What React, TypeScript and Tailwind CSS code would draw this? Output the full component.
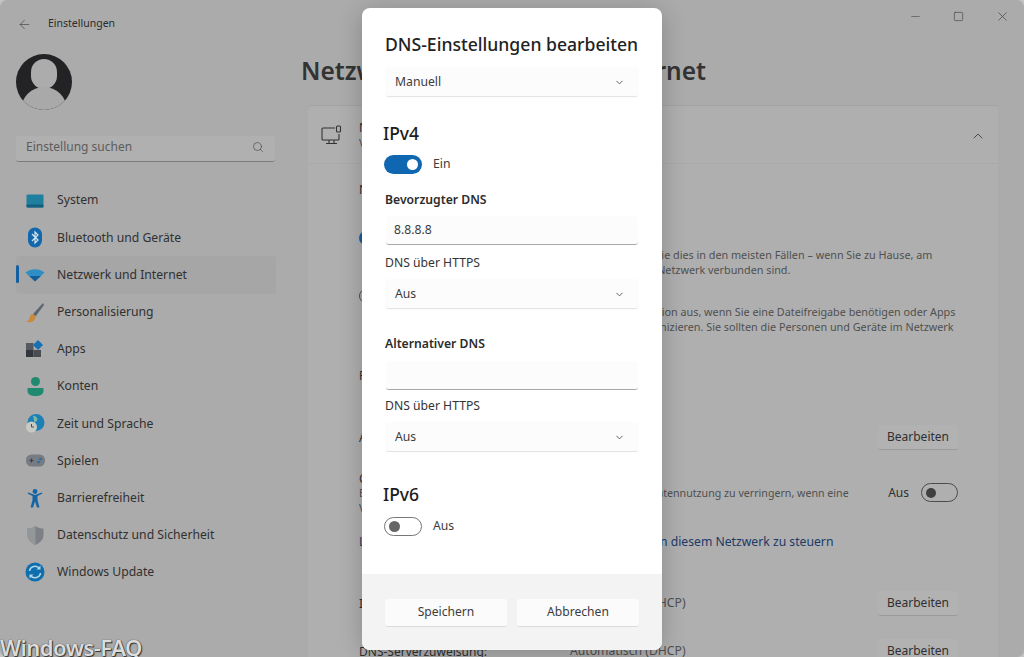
import React from "react";
import { ArrowLeft, Search, ChevronDown, ChevronUp, Minus, Square, X } from "lucide-react";

const font = { fontFamily: '"Noto Sans", "Open Sans", sans-serif' };

function SystemIcon() {
  return (
    <svg width="18" height="14" viewBox="0 0 18 14">
      <rect x="0.5" y="0.5" width="17" height="13" rx="1" fill="#1f7f9f" />
      <rect x="0.5" y="10.5" width="17" height="3" rx="1" fill="#155f7f" />
    </svg>
  );
}
function BluetoothIcon() {
  return (
    <svg width="16" height="21" viewBox="0 0 16 21">
      <rect x="1" y="0.5" width="14" height="20" rx="7" fill="#1267ad" />
      <path d="M5 7l6 6-3 3V5l3 3-6 6" fill="none" stroke="#d8e6f0" strokeWidth="1.2" />
    </svg>
  );
}
function WifiIcon() {
  return (
    <svg width="20" height="14" viewBox="0 0 20 14">
      <path d="M0.5 4.5C5.5 0 14.5 0 19.5 4.5L16 8H4z" fill="#2f8fc4" />
      <path d="M4 8h12l-6 5.5z" fill="#0f5d9a" />
    </svg>
  );
}
function BrushIcon() {
  return (
    <svg width="20" height="21" viewBox="0 0 20 21">
      <path d="M18 1 8 12l2.5 2.5L19 3z" fill="#5d6670" />
      <path d="M8 12c-3 0-3 3-3.500 4.500S3 19 1 19.500c4 1.500 9 1 9.500-5z" fill="#c98a3c" />
    </svg>
  );
}
function AppsIcon() {
  return (
    <svg width="18" height="18" viewBox="0 0 18 18">
      <rect x="0" y="3" width="7.500" height="7" fill="#555b61" />
      <rect x="0" y="10" width="7.500" height="7" fill="#33363a" />
      <rect x="7.500" y="10" width="7.500" height="7" fill="#4a4e52" />
      <path d="M12 0l5 5-5 5-5-5z" fill="#1571b3" />
    </svg>
  );
}
function UserIcon() {
  return (
    <svg width="17" height="19" viewBox="0 0 17 19">
      <circle cx="8.500" cy="4.500" r="4.500" fill="#1f8a70" />
      <path d="M0.500 11h16v3c0 3-3 5-8 5s-8-2-8-5z" fill="#1f8a70" />
    </svg>
  );
}
function GlobeIcon() {
  return (
    <svg width="19" height="19" viewBox="0 0 19 19">
      <circle cx="10" cy="8.500" r="8.500" fill="#1c7fb5" />
      <path d="M7 1.500c4 1 6 4 3 6s-3 5 0 9" fill="#7fb7a5" />
      <circle cx="5.500" cy="13" r="5.500" fill="#c9c9c4" />
      <path d="M5.500 10v3h2.500" fill="none" stroke="#4a4e52" strokeWidth="1" />
    </svg>
  );
}
function GameIcon() {
  return (
    <svg width="19" height="13" viewBox="0 0 19 13">
      <rect x="0" y="0.500" width="19" height="12" rx="5.500" fill="#777b82" />
      <path d="M3.500 6.500h4M5.500 4.500v4" stroke="#3c3f44" strokeWidth="1.100" />
      <circle cx="12.500" cy="8" r="1.300" fill="#2a6aa5" />
      <circle cx="14.500" cy="5" r="1.300" fill="#2a6aa5" />
    </svg>
  );
}
function AccessIcon() {
  return (
    <svg width="16" height="19" viewBox="0 0 16 19">
      <circle cx="8" cy="2.500" r="2.400" fill="#1465a3" />
      <path d="M0.500 4.500 5.500 7v4L3.500 18.500H6l2-6 2 6h2.500L10.500 11V7l5-2.500-.8-1L8 6 1.300 3.500z" fill="#1465a3" />
    </svg>
  );
}
function ShieldIcon() {
  return (
    <svg width="17" height="19" viewBox="0 0 17 19">
      <path d="M8.500 0C6 2 3 2.500 0.500 2.500V9c0 5 4 8 8 10 4-2 8-5 8-10V2.500C14 2.500 11 2 8.500 0z" fill="#7d8185" />
      <path d="M8.500 0C6 2 3 2.500 0.500 2.500V9c0 5 4 8 8 10z" fill="#94979a" />
    </svg>
  );
}
function UpdateIcon() {
  return (
    <svg width="20" height="20" viewBox="0 0 20 20">
      <circle cx="10" cy="10" r="9.500" fill="#0f6fae" />
      <path d="M4.500 9A5.600 5.600 0 0 1 14.500 6.500M15.500 11A5.600 5.600 0 0 1 5.500 13.500" fill="none" stroke="#b5d6e6" strokeWidth="1.600" />
      <path d="M15.500 3.500v4h-4zM4.500 16.500v-4h4z" fill="#b5d6e6" />
    </svg>
  );
}

const nav: [string, React.ReactNode, boolean?][] = [
  ["System", <SystemIcon />],
  ["Bluetooth und Geräte", <BluetoothIcon />],
  ["Netzwerk und Internet", <WifiIcon />, true],
  ["Personalisierung", <BrushIcon />],
  ["Apps", <AppsIcon />],
  ["Konten", <UserIcon />],
  ["Zeit und Sprache", <GlobeIcon />],
  ["Spielen", <GameIcon />],
  ["Barrierefreiheit", <AccessIcon />],
  ["Datenschutz und Sicherheit", <ShieldIcon />],
  ["Windows Update", <UpdateIcon />],
];

function Sidebar() {
  return (
    <aside className="w-[300px] shrink-0 flex flex-col pl-[16px] pt-[15px]">
      <div className="h-[18px] flex items-center text-[#2c2c2c] text-[10.500px]">
        <ArrowLeft size={15} strokeWidth={1.100} className="text-[#444] ml-[1px]" />
        <span className="ml-[16px]">Einstellungen</span>
      </div>
      <div className="mt-[21px] w-[56px] h-[56px] rounded-full bg-[#232325] overflow-hidden relative">
        <div className="absolute left-[15px] top-[5px] w-[26px] h-[30px] rounded-full bg-[#acacac]" />
        <div className="absolute left-[5px] top-[33px] w-[46px] h-[30px] rounded-t-[24px] bg-[#a9a9a9]" />
      </div>
      <div className="mt-[26px] w-[259px] h-[26px] bg-[#b0b0b0] border-b border-[#7c7c7c] rounded-[3px] flex items-center justify-between pl-[10px] pr-[11px] pb-[3px] text-[#5c5c5c] text-[12px]">
        <span>Einstellung suchen</span>
        <Search size={12} className="text-[#4c4c4c]" strokeWidth={1.400} />
      </div>
      <nav className="mt-[20px] flex flex-col w-[260px]">
        {nav.map(([label, icon, active]) => (
          <div key={label} className={"h-[37.200px] flex items-center relative rounded-[4px] text-[#303030] text-[12.200px] " + (active ? "bg-[#a6a6a6]" : "")}>
            {active && <span className="absolute left-0 top-[9px] w-[3px] h-[18px] rounded-full bg-[#1360a0]" />}
            <span className="w-[20px] ml-[9px] flex justify-center">{icon}</span>
            <span className="ml-[12px]">{label}</span>
          </div>
        ))}
      </nav>
    </aside>
  );
}

function EditButton() {
  return (
    <div className="w-[80px] h-[25px] flex items-center justify-center rounded-[3px] bg-[#b2b2b2] border-b border-[#9a9a9a] text-[#303030] text-[12px] shrink-0">
      Bearbeiten
    </div>
  );
}

function OffToggle() {
  return (
    <span className="w-[37px] h-[19px] rounded-full border border-[#4c4c4c] flex items-center pl-[4px]">
      <span className="w-[10px] h-[10px] rounded-full bg-[#3f3f3f]" />
    </span>
  );
}

function Main() {
  return (
    <main className="flex-1 min-w-0 flex flex-col">
      <div className="h-[33px] shrink-0 flex justify-end items-center gap-[31px] pr-[14px] text-[#3a3a3a]">
        <Minus size={13} strokeWidth={1} />
        <Square size={11} strokeWidth={1.300} />
        <X size={15} strokeWidth={1} />
      </div>
      <h1 className="mt-[22px] ml-[1px] shrink-0 text-[24.500px] leading-[32px] font-semibold text-[#333] whitespace-nowrap">Netzwerk und Internet &gt; Ethernet</h1>
      <section className="mt-[18px] ml-[8px] w-[690px] shrink-0 flex flex-col text-[12px] text-[#303030] bg-[#afafaf] rounded-[4px] border-t border-[#a2a2a2]">
        <div className="h-[58px] flex items-center pl-[13px] pr-[13px] border-b border-[#a9a9a9]">
          <svg width="22" height="20" viewBox="0 0 22 20" fill="none" stroke="#333" strokeWidth="1.100">
            <path d="M14 3H2a1 1 0 0 0-1 1v10a1 1 0 0 0 1 1h15a1 1 0 0 0 1-1V9" />
            <path d="M8 15v3M13 15v3M5 18.500h11" />
            <rect x="15.500" y="1" width="4" height="6" rx="1" />
          </svg>
          <div className="ml-[16px] flex-1 leading-[15px]">
            <div>Netzwerk</div>
            <div className="text-[#505050] text-[10.800px]">Verbunden</div>
          </div>
          <ChevronUp size={16} strokeWidth={1.200} className="-mr-[1px] mt-[3px] text-[#333]" />
        </div>
        <div className="pl-[51px] pr-[40px] flex flex-col">
          <div className="mt-[18px] leading-[16px]">Netzwerkprofiltyp</div>
          <div className="mt-[32px] flex items-center leading-[16px]">
            <span className="w-[14px] h-[14px] rounded-full border-[4px] border-[#1360a0] shrink-0" />
            <span className="ml-[7px]">Öffentliches Netzwerk (empfohlen)</span>
          </div>
          <div className="ml-[21px] mt-[1px] text-[10.800px] leading-[15px] text-[#505050] w-[640px]">
            <div className="whitespace-nowrap">Ihr Gerät ist im Netzwerk nicht auffindbar. Verwenden Sie dies in den meisten Fällen – wenn Sie zu Hause, am</div>
            <div className="whitespace-nowrap">Arbeitsplatz oder an einem öffentlichen Ort mit einem Netzwerk verbunden sind.</div>
          </div>
          <div className="mt-[11px] flex items-center leading-[16px]">
            <span className="w-[14px] h-[14px] rounded-full border border-[#4c4c4c] shrink-0" />
            <span className="ml-[7px]">Privates Netzwerk</span>
          </div>
          <div className="ml-[21px] text-[10.800px] leading-[15px] text-[#505050] w-[640px]">
            <div className="whitespace-nowrap">Ihr Gerät ist im Netzwerk sichtbar. Wählen Sie diese Option aus, wenn Sie eine Dateifreigabe benötigen oder Apps</div>
            <div className="whitespace-nowrap">verwenden möchten, die über dieses Netzwerk kommunizieren. Sie sollten die Personen und Geräte im Netzwerk</div>
            <div className="whitespace-nowrap">kennen und ihnen vertrauen.</div>
          </div>
          <div className="mt-[19px] leading-[16px]">Firewall- und Sicherheitseinstellungen konfigurieren</div>
          <div className="mt-[41px] flex items-center justify-between">
            <span>Authentifizierungseinstellungen</span>
            <EditButton />
          </div>
          <div className="mt-[21px] flex items-start justify-between">
            <div className="leading-[15px] text-[10.650px] text-[#505050]">
              <div className="text-[12px] text-[#303030]">Getaktete Verbindung</div>
              <div className="whitespace-nowrap">Einige Apps funktionieren möglicherweise anders, um die Datennutzung zu verringern, wenn eine</div>
              <div>Verbindung besteht</div>
            </div>
            <div className="flex items-center gap-[12px] shrink-0 text-[12px] text-[#303030] mt-[12px]">
              <span>Aus</span>
              <OffToggle />
            </div>
          </div>
          <div className="mt-[18px] leading-[16px] whitespace-nowrap text-[12.200px] text-[#1a3a68]">
            Legen Sie ein Datenlimit fest, um die Datennutzung in diesem Netzwerk zu steuern
          </div>
          <div className="mt-[41px] flex items-center">
            <span className="w-[211px]">IP-Zuweisung:</span>
            <span className="flex-1 text-[12.200px] text-[#505050]">Automatisch (DHCP)</span>
            <EditButton />
          </div>
          <div className="mt-[23px] flex items-center">
            <span className="w-[211px]">DNS-Serverzuweisung:</span>
            <span className="flex-1 text-[12.200px] text-[#505050]">Automatisch (DHCP)</span>
            <EditButton />
          </div>
        </div>
      </section>
    </main>
  );
}

function Select({ label }: { label: string }) {
  return (
    <div className="w-[252px] h-[29px] mx-auto flex items-center justify-between pl-[9px] pr-[13px] rounded-[3px] bg-[#fcfcfc] border-b border-[#e4e4e4] shadow-[0_0_2px_rgba(0,0,0,0.06)] text-[#3c3c3c] text-[12.200px]">
      <span>{label}</span>
      <ChevronDown size={11} className="text-[#555]" />
    </div>
  );
}

function TextField({ value }: { value?: string }) {
  return (
    <div className="w-[252px] h-[29px] mx-auto flex items-center pl-[8px] rounded-[3px] bg-[#fcfcfc] border-b-[1.500px] border-[#a8a8a8] text-[#3c3c3c] text-[12.200px]">
      {value}
    </div>
  );
}

function Dialog() {
  return (
    <div className="absolute left-[362px] top-[8px] w-[300px] h-[642px] rounded-[8px] bg-white flex flex-col overflow-hidden shadow-[0_4px_24px_rgba(0,0,0,0.22)]">
      <div className="flex-1 flex flex-col px-[22px]">
        <h2 className="mt-[25px] ml-[1px] text-[17.600px] leading-[22px] font-medium text-[#222] whitespace-nowrap">DNS-Einstellungen bearbeiten</h2>
        <div className="mt-[13px]"><Select label="Manuell" /></div>
        <h3 className="mt-[25px] -ml-[1px] text-[17.500px] leading-[22px] font-medium text-[#1c1c1c]">IPv4</h3>
        <div className="mt-[11px] flex items-center">
          <span className="w-[38px] h-[19px] rounded-full bg-[#0f67b1] flex items-center justify-end pr-[4px]">
            <span className="w-[11px] h-[11px] rounded-full bg-white" />
          </span>
          <span className="ml-[11px] text-[12.200px] text-[#3c3c3c]">Ein</span>
        </div>
        <div className="mt-[18px] ml-[1px] text-[12.200px] leading-[16px] font-semibold text-[#2c2c2c]">Bevorzugter DNS</div>
        <div className="mt-[8px]"><TextField value="8.8.8.8" /></div>
        <div className="mt-[10px] ml-[1px] text-[12.200px] leading-[16px] text-[#333]">DNS über HTTPS</div>
        <div className="mt-[9px]"><Select label="Aus" /></div>
        <div className="mt-[27px] ml-[1px] text-[12.200px] leading-[16px] font-semibold text-[#2c2c2c]">Alternativer DNS</div>
        <div className="mt-[9px]"><TextField /></div>
        <div className="mt-[8px] ml-[1px] text-[12.200px] leading-[16px] text-[#333]">DNS über HTTPS</div>
        <div className="mt-[9px]"><Select label="Aus" /></div>
        <h3 className="mt-[31px] -ml-[1px] text-[17.500px] leading-[22px] font-medium text-[#1c1c1c]">IPv6</h3>
        <div className="mt-[12px] flex items-center">
          <span className="w-[38px] h-[19px] rounded-full border border-[#777] flex items-center pl-[4px]">
            <span className="w-[11px] h-[11px] rounded-full bg-[#666]" />
          </span>
          <span className="ml-[11px] text-[12.200px] text-[#3c3c3c]">Aus</span>
        </div>
      </div>
      <div className="h-[76px] bg-[#f3f3f3] flex items-center gap-[10px] px-[23px] pt-[2px]">
        {["Speichern", "Abbrechen"].map((t) => (
          <div key={t} className="flex-1 h-[28px] flex items-center justify-center rounded-[3px] bg-[#fbfbfb] border-b border-[#dcdcdc] text-[#3c3c3c] text-[12.100px]">
            {t}
          </div>
        ))}
      </div>
    </div>
  );
}

export default function App() {
  return (
    <div className="relative w-[1024px] h-[657px] overflow-hidden bg-[#c4c4c4]" style={font}>
      <div className="w-full h-full rounded-[7px] overflow-hidden bg-[#ababab] flex">
        <Sidebar />
        <Main />
      </div>
      <Dialog />
      <div className="absolute left-0 bottom-[-3px] text-[22px] leading-[26px] font-semibold text-[#dcdcdc] [text-shadow:0_0_1px_#222,1px_1px_1px_#333] tracking-[-0.5px]">
        Windows-FAQ
      </div>
    </div>
  );
}
